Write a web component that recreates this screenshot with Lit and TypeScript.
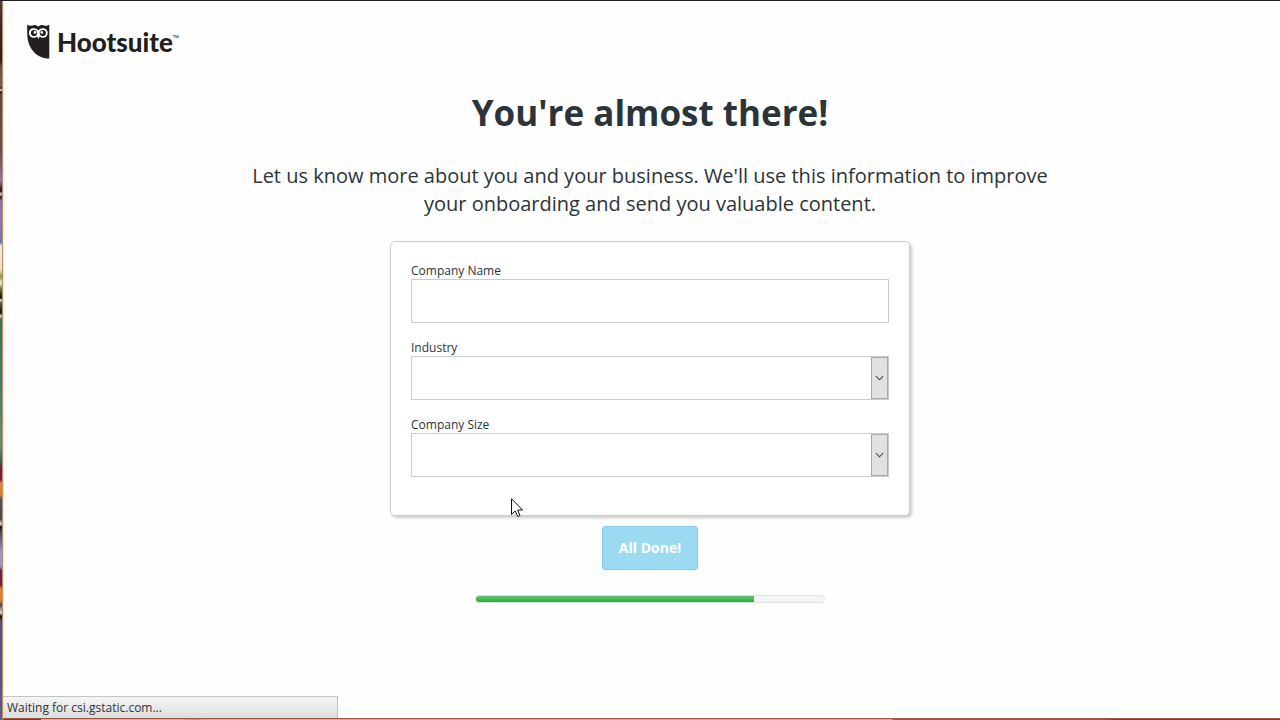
import { LitElement, html, css } from "lit";
import { customElement, property, state } from "lit/decorators.js";

@customElement("brand-logo")
class BrandLogo extends LitElement {
  static styles = css`
    :host {
      display: flex;
      align-items: center;
      gap: 7px;
      color: #231f20;
    }
    .owl {
      width: 23px;
      height: 35px;
      display: block;
    }
    .word {
      font: 900 26px/32px Lato, sans-serif;
      display: flex;
      align-items: center;
    }
    .mark {
      font: 400 8px/16px "Open Sans", sans-serif;
      align-self: flex-start;
      padding-top: 4px;
    }
  `;
  render() {
    return html`
      <svg class="owl" viewBox="0 0 23 35" aria-hidden="true">
        <path
          fill="#231f20"
          d="M0.2 0.5C1.4 1.4 2.6 1.8 4 1.7C6 1.5 7.2 1 8.4 1L11.2 2.4L14 1C15.4 1 16.6 1.6 18.6 1.7C20 1.7 21.2 1.3 22.3 0.4V34.6C15 34.4 9 31.5 4.8 25.5C1.5 20.5 0.2 15 0.2 9Z"
        />
        <path
          fill="#fff"
          d="M2 9C2 5.6 4.3 4.2 6.6 4.2C9 4.2 10.6 5.5 11.3 6.6C12 5.5 13.6 4.2 16 4.2C18.4 4.2 20.7 5.8 20.7 9C20.7 12 18.6 13.8 16.2 13.8C14.8 13.8 13.6 13.3 12.8 12.5L11.4 14.8L10 12.5C9.1 13.3 8 13.8 6.6 13.8C4.2 13.8 2 12 2 9Z"
        />
        <circle cx="7" cy="9" r="3.1" fill="#231f20" />
        <circle cx="15.8" cy="9" r="3.1" fill="#231f20" />
        <circle cx="8" cy="8.4" r="1.3" fill="#fff" />
        <circle cx="14.8" cy="8.4" r="1.3" fill="#fff" />
      </svg>
      <span class="word">Hootsuite<span class="mark">™</span></span>
    `;
  }
}

@customElement("progress-track")
class ProgressTrack extends LitElement {
  @property({ type: Number }) value = 0;
  static styles = css`
    :host {
      display: block;
      box-sizing: border-box;
      height: 8px;
      border: 1px solid #e2e2e2;
      border-radius: 4px;
      background: #f5f5f5;
      overflow: hidden;
    }
    .fill {
      height: 100%;
      background: linear-gradient(#5fc767, #45bd56 50%, #2f9f4c);
    }
  `;
  render() {
    return html`<div
      class="fill"
      role="progressbar"
      aria-label="Setup progress"
      aria-valuenow=${this.value}
      style="width:${this.value}%"
    ></div>`;
  }
}

@customElement("app-root")
class AppRoot extends LitElement {
  @state() private progress = 80;

  static styles = css`
    :host {
      display: block;
      font-family: "Open Sans", sans-serif;
      color: #2b3438;
    }
    * {
      box-sizing: border-box;
    }
    .desktop {
      display: grid;
      grid-template-columns: 3px minmax(0, 1fr);
      grid-template-rows: minmax(0, 1fr) 2px;
      min-height: 100vh;
      border-top: 1px solid #231f20;
    }
    .edge {
      grid-row: 1 / 3;
      border-right: 1px solid #d98352;
      background: linear-gradient(
        #42404a 0px, #30282c 30px, #2b2024 60px, #5d5453 66px, #6a6268 86px,
        #111 87px, #eee 89px, #111 91px, #4f4c50 93px, #5b5355 150px,
        #8a76b4 180px, #111 190px, #ddd 193px, #222 196px, #8676b8 200px,
        #7f75bd 235px, #3c83b0 241px, #e9ecec 245px, #e8e5cf 268px,
        #8a9a35 276px, #eee 282px, #44803c 288px, #111 297px, #ddd 299px,
        #35695c 302px, #111 312px, #ddd 315px, #327861 318px, #397d70 380px,
        #57927a 445px, #2c5d60 462px, #6b2051 466px, #6b2051 479px,
        #e08a2e 482px, #d6802d 494px, #3e5963 498px, #2e4f5c 518px,
        #ddd 523px, #111 526px, #3a4468 530px, #8b9bcb 550px, #8b9bcb 565px,
        #6b2058 570px, #74204e 584px, #dd8a3a 588px, #cf7c39 600px,
        #40486d 604px, #ddd 612px, #111 615px, #4b5385 620px, #525c91 719px
      );
    }
    .bottom {
      border-top: 1px solid #a8533f;
      background: linear-gradient(
        90deg, #7b3b36 0%, #7b3b36 3%, #f0a083 3%, #f0a083 14%, #d58270 15%,
        #f3a087 16%, #f3a087 69.6%, #a25454 69.7%, #a25454 86%,
        #7c3c38 87%, #7c3c38 100%
      );
    }
    .window {
      display: flex;
      flex-direction: column;
      background: #fefefe;
    }
    header {
      padding: 23px 24px 0 24px;
      display: flex;
    }
    main {
      flex: 1;
      display: flex;
      flex-direction: column;
      align-items: center;
      padding: 30px 0 24px 17px;
    }
    h1 {
      margin: 0;
      font-size: 35px;
      line-height: 48px;
      font-weight: 700;
      text-align: center;
    }
    .intro {
      margin: 25px 0 23px;
      max-width: 820px;
      font-size: 20px;
      line-height: 28px;
      text-align: center;
    }
    form {
      align-self: stretch;
      display: flex;
      flex-direction: column;
      align-items: center;
    }
    .card {
      width: 100%;
      max-width: 520px;
      padding: 20px 20px 38px;
      display: grid;
      gap: 16px;
      border: 1px solid #ccc;
      border-radius: 5px;
      background: #fff;
      box-shadow: 2px 2px 3px rgba(0, 0, 0, 0.2);
    }
    .field {
      display: flex;
      flex-direction: column;
    }
    label {
      font-size: 12px;
      line-height: 17px;
    }
    input,
    select {
      width: 100%;
      height: 44px;
      margin: 0;
      padding: 0 12px;
      border: 1px solid #ccc;
      border-radius: 0;
      background: #fff;
      color: inherit;
      font: 14px/20px "Open Sans", sans-serif;
    }
    .picker {
      display: grid;
      align-items: stretch;
    }
    .picker > * {
      grid-area: 1 / 1;
    }
    select {
      appearance: none;
    }
    .drop {
      justify-self: end;
      width: 17px;
      height: 42px;
      align-self: center;
      margin-right: 1px;
      display: grid;
      place-items: center;
      border: 1px solid #a9a9a9;
      background: #e1e1e1;
      pointer-events: none;
    }
    .drop svg {
      width: 9px;
      height: 6px;
      display: block;
    }
    button {
      margin: 10px 0 25px;
      padding: 0 16px;
      height: 44px;
      border: 1px solid #84cdec;
      border-radius: 3px;
      background: #9cdaf1;
      color: #fff;
      font: 700 14px/20px "Open Sans", sans-serif;
    }
    progress-track {
      width: 100%;
      max-width: 350px;
    }
    .status {
      align-self: flex-start;
      width: 335px;
      max-width: 100%;
      height: 22px;
      padding-left: 4px;
      border: 1px solid #c4c4c4;
      border-left: 0;
      border-bottom: 0;
      background: linear-gradient(#f5f5f5, #dcdede);
      color: #333;
      font-size: 12px;
      line-height: 21px;
    }
    .pointer {
      position: absolute;
      left: 511px;
      top: 498px;
      width: 12px;
      height: 20px;
      pointer-events: none;
    }
  `;

  private chevron() {
    return html`<span class="drop" aria-hidden="true">
      <svg viewBox="0 0 10 6">
        <path d="M1 1L5 5L9 1" fill="none" stroke="#444" stroke-width="1.2" />
      </svg>
    </span>`;
  }

  private picker(id: string, label: string) {
    return html`<div class="field">
      <label for=${id}>${label}</label>
      <div class="picker">
        <select id=${id}>
          <option value=""></option>
        </select>
        ${this.chevron()}
      </div>
    </div>`;
  }

  render() {
    return html`
      <div class="desktop">
        <div class="edge"></div>
        <div class="window">
          <header><brand-logo></brand-logo></header>
          <main>
            <h1>You're almost there!</h1>
            <p class="intro">
              Let us know more about you and your business. We'll use this
              information to improve your onboarding and send you valuable
              content.
            </p>
            <form>
              <div class="card">
                <div class="field">
                  <label for="company">Company Name</label>
                  <input id="company" type="text" />
                </div>
                ${this.picker("industry", "Industry")}
                ${this.picker("size", "Company Size")}
              </div>
              <button type="button">All Done!</button>
            </form>
            <progress-track .value=${this.progress}></progress-track>
          </main>
          <div class="status">Waiting for csi.gstatic.com...</div>
        </div>
        <div class="bottom"></div>
      </div>
      <svg class="pointer" viewBox="0 0 12 20" aria-hidden="true">
        <path
          d="M0.5 0.7V16.5L4.2 13L6.7 18.5L9 17.5L6.6 12H11.5Z"
          fill="#fff"
          stroke="#111"
          stroke-width="1"
        />
      </svg>
    `;
  }
}
